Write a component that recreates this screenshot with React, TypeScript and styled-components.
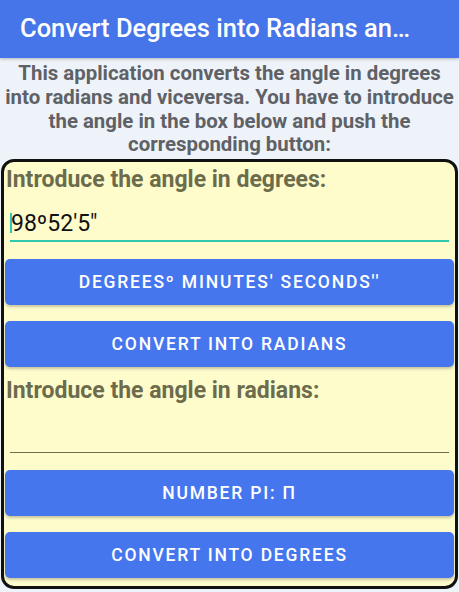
import React from 'react';
import styled, { createGlobalStyle } from 'styled-components';

const GlobalStyle = createGlobalStyle`
  html, body {
    margin: 0;
    padding: 0;
    background: #eef3f9;
  }
  body {
    width: 459px;
    height: 592px;
    overflow: hidden;
    font-family: Roboto, 'Noto Sans', Arial, sans-serif;
  }
`;

const Screen = styled.div`
  display: flex;
  flex-direction: column;
  width: 459px;
  height: 592px;
  background: #eef3f9;
`;

const AppBar = styled.header`
  display: flex;
  align-items: center;
  height: 59px;
  padding: 0 40px 2px 20px;
  background: #4675e9;
  box-shadow: 0 1px 3px rgba(0, 0, 0, 0.25);
  box-sizing: border-box;
`;

const Title = styled.h1`
  margin: 0;
  font-size: 25.5px;
  font-weight: 500;
  color: #ffffff;
  white-space: nowrap;
  overflow: hidden;
  text-overflow: ellipsis;
`;

const Intro = styled.p`
  margin: 4px 0 0;
  padding: 0;
  font-size: 20.4px;
  line-height: 23.7px;
  font-weight: 700;
  text-align: center;
  color: #5e6166;
`;

const Card = styled.section`
  display: flex;
  flex-direction: column;
  margin: 2px 1px 3px;
  padding: 5px 1px 8px;
  background: #fffccc;
  border: 3px solid #111111;
  border-radius: 13px;
`;

const Label = styled.div`
  padding-left: 1px;
  font-size: 23px;
  line-height: 26px;
  font-weight: 700;
  color: #6c6c4c;
  white-space: nowrap;
`;

const Field = styled.div<{ focused?: boolean }>`
  display: flex;
  align-items: center;
  height: 36px;
  margin: 13px 5px 0;
  box-sizing: border-box;
  border-bottom: ${(p) => (p.focused ? '2px solid #2ec8ae' : '1px solid #6e6e55')};
  font-size: 23px;
  color: #111111;
`;

const Caret = styled.span`
  width: 2px;
  height: 20px;
  margin-right: -1px;
  background: #2ec8ae;
`;

const Button = styled.button<{ first?: boolean }>`
  height: 46px;
  margin: ${(p) => (p.first ? '17px' : '16px')} 0 0;
  border: none;
  border-radius: 5px;
  background: #4676ee;
  box-shadow: 0 2px 3px rgba(0, 0, 0, 0.22);
  color: #ffffff;
  font-family: Roboto, 'Noto Sans', Arial, sans-serif;
  font-size: 17.5px;
  font-weight: 500;
  letter-spacing: 1.8px;
  text-transform: uppercase;
  white-space: nowrap;
`;

const SecondLabel = styled(Label)`
  margin-top: 11px;
`;

export default function App() {
  return (
    <Screen>
      <GlobalStyle />
      <AppBar>
        <Title>Convert Degrees into Radians and viceversa</Title>
      </AppBar>
      <Intro>
        This application converts the angle in degrees into radians and
        viceversa. You have to introduce the angle in the box below and push
        the corresponding button:
      </Intro>
      <Card>
        <Label>Introduce the angle in degrees:</Label>
        <Field focused>
          <Caret />
          <span>98º52'5"</span>
        </Field>
        <Button first>Degreesº Minutes' Seconds''</Button>
        <Button>Convert into radians</Button>
        <SecondLabel>Introduce the angle in radians:</SecondLabel>
        <Field />
        <Button first>Number PI: Π</Button>
        <Button>Convert into degrees</Button>
      </Card>
    </Screen>
  );
}
